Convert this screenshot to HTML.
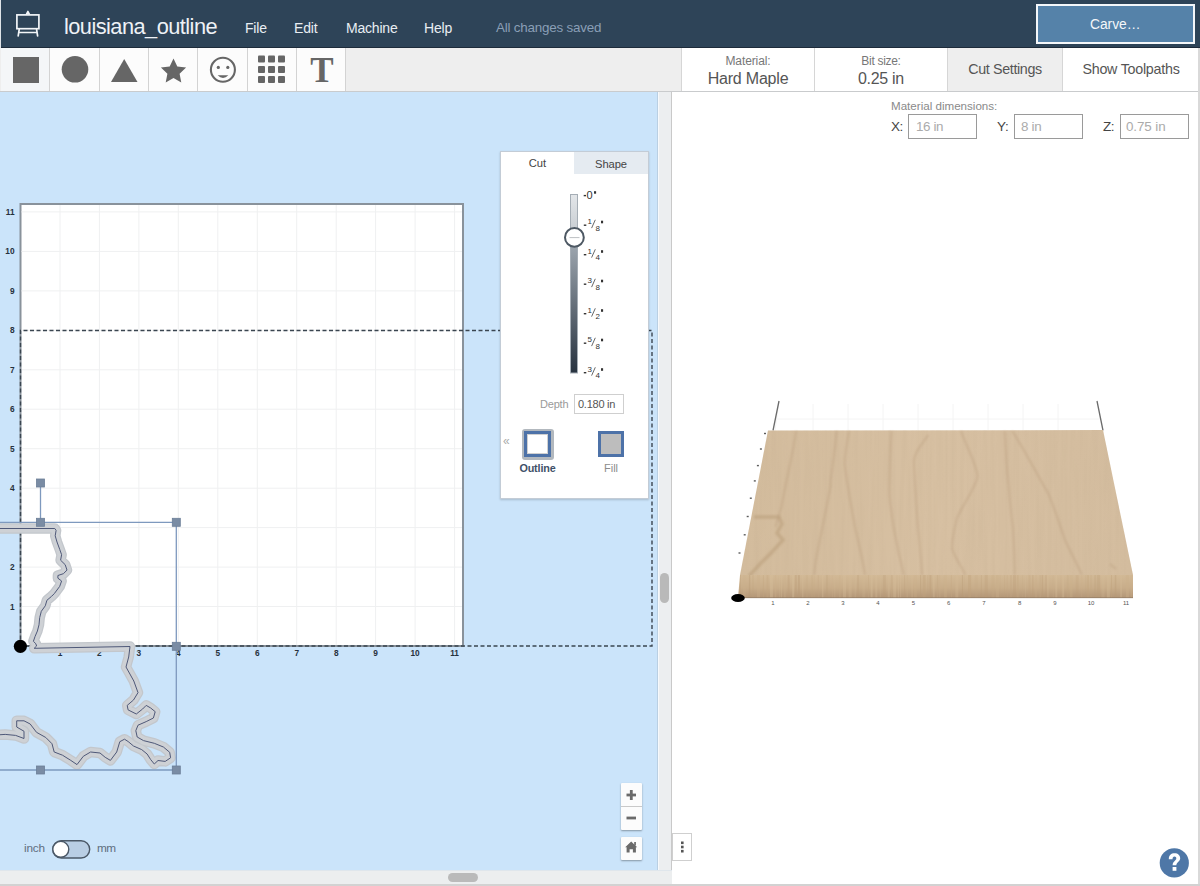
<!DOCTYPE html>
<html><head><meta charset="utf-8">
<style>
*{box-sizing:border-box;margin:0;padding:0}
html,body{width:1200px;height:886px;overflow:hidden;background:#fff;font-family:"Liberation Sans",sans-serif}
.a{position:absolute}
#hdr{left:0;top:0;width:1200px;height:48px;background:#2e4458;border-bottom:1px solid #1d2b3a}
.mn{color:#e9eef3;font-size:14px;top:20px;letter-spacing:-0.2px}
#tb{left:0;top:48px;width:1200px;height:44px;background:#eeeeee;border-bottom:1px solid #c9cbcd}
.tc{top:0;height:43px;width:49px;background:#fbfbfb;border-right:1px solid #d6d6d6}
.ic{fill:#666}
#left{left:0;top:92px;width:658px;height:778px;background:#cbe4fa;overflow:hidden}
#vs{left:657px;top:92px;width:15px;height:792px;background:#eceef0;border-left:1px solid #b9cfe3;border-right:1px solid #c9c9c9;box-shadow:inset 1px 0 0 #f6f9fc}
#hs{left:0;top:870px;width:672px;height:14px;background:#eceeef;border-top:1px solid #dfe6ec}
#right{left:672px;top:92px;width:527px;height:792px;background:#fff}
</style></head>
<body>
<!-- header -->
<div id="hdr" class="a"></div>
<div class="a" style="left:0;top:0;width:1px;height:92px;background:#dfe3e7"></div>
<svg class="a" style="left:14px;top:10px" width="28" height="28" viewBox="0 0 28 28">
 <g fill="none" stroke="#f2f5f8" stroke-width="1.7" stroke-linecap="round">
  <rect x="2.9" y="4.9" width="22" height="13.8"/>
  <path d="M5.2 19.5 L4.2 25.8 M22.6 19.5 L23.6 25.8 M5.2 22.5 L22.6 22.5"/>
 </g>
 <path d="M12.2 4.6 L13.9 1.4 L15.6 4.6" fill="none" stroke="#f2f5f8" stroke-width="1.5" stroke-linejoin="round"/>
</svg>
<div class="a" style="left:64px;top:13.5px;color:#eef2f6;font-size:21.8px;letter-spacing:-0.55px">louisiana_outline</div>
<div class="a mn" style="left:245px">File</div>
<div class="a mn" style="left:294px">Edit</div>
<div class="a mn" style="left:346px">Machine</div>
<div class="a mn" style="left:424px">Help</div>
<div class="a mn" style="left:496px;color:#8a9fb6;font-size:13.4px;top:20px">All changes saved</div>
<div class="a" style="left:1036px;top:4px;width:158.5px;height:39.5px;background:#5582a9;border:2px solid #f4f7fa;color:#f4f7fa;font-size:13.8px;text-align:center;line-height:38.5px">Carve&hellip;</div>

<!-- toolbar -->
<div id="tb" class="a"></div>
<div class="a" style="left:681px;top:48px;width:519px;height:43px;background:#fff"></div>
<div class="a" style="left:1px;top:48px;width:48px;height:43px;background:#f4f6f8"></div>
<div class="a" style="left:49px;top:48px;width:297px;height:43px;background:#fcfcfc"></div>
<div class="a" style="left:49px;top:48px;width:1px;height:43px;background:#d3d3d3"></div>
<div class="a" style="left:99px;top:48px;width:1px;height:43px;background:#d3d3d3"></div>
<div class="a" style="left:148px;top:48px;width:1px;height:43px;background:#d3d3d3"></div>
<div class="a" style="left:197px;top:48px;width:1px;height:43px;background:#d3d3d3"></div>
<div class="a" style="left:247px;top:48px;width:1px;height:43px;background:#d3d3d3"></div>
<div class="a" style="left:296px;top:48px;width:1px;height:43px;background:#d3d3d3"></div>
<div class="a" style="left:345px;top:48px;width:1px;height:43px;background:#d3d3d3"></div>
<svg class="a" style="left:0;top:48px" width="346" height="43" viewBox="0 48 346 43">
 <g fill="#666">
  <rect x="13" y="57" width="26" height="26"/>
  <circle cx="75" cy="69.3" r="13.3"/>
  <path d="M124.2 59 L137.5 82 L111 82 Z"/>
  <path d="M173.5 58.5 L177.3 66.5 L186.1 67.6 L179.6 73.7 L181.3 82.4 L173.5 78.1 L165.7 82.4 L167.4 73.7 L160.9 67.6 L169.7 66.5 Z"/>
  <circle cx="222.9" cy="69.8" r="12" fill="none" stroke="#666" stroke-width="2.1"/>
  <circle cx="218.3" cy="67.4" r="1.6"/>
  <circle cx="227.8" cy="67.4" r="1.6"/>
  <path d="M217.6 75.3 Q223 80.5 228.4 75.3 Z"/>
  <rect x="258" y="55.5" width="7" height="7" rx="1"/><rect x="268" y="55.5" width="7" height="7" rx="1"/><rect x="278" y="55.5" width="7" height="7" rx="1"/>
  <rect x="258" y="66" width="7" height="7" rx="1"/><rect x="268" y="66" width="7" height="7" rx="1"/><rect x="278" y="66" width="7" height="7" rx="1"/>
  <rect x="258" y="76" width="7" height="7" rx="1"/><rect x="268" y="76" width="7" height="7" rx="1"/><rect x="278" y="76" width="7" height="7" rx="1"/>
 </g>
</svg>
<div class="a" style="left:308px;top:51px;width:28px;text-align:center;font-family:'Liberation Serif',serif;font-weight:bold;font-size:35px;line-height:40px;color:#666">T</div>
<!-- right toolbar -->
<div class="a" style="left:681px;top:48px;width:1px;height:43px;background:#d6d6d6"></div>
<div class="a" style="left:814px;top:48px;width:1px;height:43px;background:#d6d6d6"></div>
<div class="a" style="left:947px;top:48px;width:116px;height:43px;background:#eeeeee;border-left:1px solid #d6d6d6;border-right:1px solid #d6d6d6"></div>
<div class="a" style="left:682px;top:54px;width:132px;text-align:center;font-size:12px;letter-spacing:-0.1px;color:#777">Material:</div>
<div class="a" style="left:682px;top:70px;width:132px;text-align:center;font-size:16px;letter-spacing:-0.2px;color:#555">Hard Maple</div>
<div class="a" style="left:815px;top:54px;width:132px;text-align:center;font-size:12px;letter-spacing:-0.3px;color:#777">Bit size:</div>
<div class="a" style="left:815px;top:70px;width:132px;text-align:center;font-size:16px;letter-spacing:-0.3px;color:#555">0.25 in</div>
<div class="a" style="left:948px;top:61px;width:114px;text-align:center;font-size:14.3px;letter-spacing:-0.35px;color:#555">Cut Settings</div>
<div class="a" style="left:1063px;top:61px;width:136px;text-align:center;font-size:14.3px;letter-spacing:-0.25px;color:#555">Show Toolpaths</div>
<div class="a" style="left:1198px;top:48px;width:2px;height:838px;background:#d9d9d9"></div>


<div id="left" class="a"></div>
<svg class="a" style="left:0;top:92px" width="658" height="778" viewBox="0 92 658 778">
 <rect x="20.5" y="204" width="442.5" height="442" fill="#fff" stroke="#89929b" stroke-width="2"/>
 <g stroke="#eff0f1" stroke-width="1"><line x1="60.0" y1="205" x2="60.0" y2="645" /><line x1="21.5" y1="606.5" x2="462" y2="606.5" /><line x1="99.4" y1="205" x2="99.4" y2="645" /><line x1="21.5" y1="567.1" x2="462" y2="567.1" /><line x1="138.9" y1="205" x2="138.9" y2="645" /><line x1="21.5" y1="527.6" x2="462" y2="527.6" /><line x1="178.3" y1="205" x2="178.3" y2="645" /><line x1="21.5" y1="488.2" x2="462" y2="488.2" /><line x1="217.8" y1="205" x2="217.8" y2="645" /><line x1="21.5" y1="448.7" x2="462" y2="448.7" /><line x1="257.3" y1="205" x2="257.3" y2="645" /><line x1="21.5" y1="409.2" x2="462" y2="409.2" /><line x1="296.7" y1="205" x2="296.7" y2="645" /><line x1="21.5" y1="369.8" x2="462" y2="369.8" /><line x1="336.2" y1="205" x2="336.2" y2="645" /><line x1="21.5" y1="330.3" x2="462" y2="330.3" /><line x1="375.6" y1="205" x2="375.6" y2="645" /><line x1="21.5" y1="290.9" x2="462" y2="290.9" /><line x1="415.1" y1="205" x2="415.1" y2="645" /><line x1="21.5" y1="251.4" x2="462" y2="251.4" /><line x1="454.6" y1="205" x2="454.6" y2="645" /><line x1="21.5" y1="211.9" x2="462" y2="211.9" /></g>
 <g font-family="Liberation Sans" font-size="8.3" font-weight="bold" fill="#27313c"><text x="14.5" y="609.5" text-anchor="end">1</text><text x="60.0" y="656" text-anchor="middle">1</text><text x="14.5" y="570.1" text-anchor="end">2</text><text x="99.4" y="656" text-anchor="middle">2</text><text x="14.5" y="530.6" text-anchor="end">3</text><text x="138.9" y="656" text-anchor="middle">3</text><text x="14.5" y="491.2" text-anchor="end">4</text><text x="178.3" y="656" text-anchor="middle">4</text><text x="14.5" y="451.7" text-anchor="end">5</text><text x="217.8" y="656" text-anchor="middle">5</text><text x="14.5" y="412.2" text-anchor="end">6</text><text x="257.3" y="656" text-anchor="middle">6</text><text x="14.5" y="372.8" text-anchor="end">7</text><text x="296.7" y="656" text-anchor="middle">7</text><text x="14.5" y="333.3" text-anchor="end">8</text><text x="336.2" y="656" text-anchor="middle">8</text><text x="14.5" y="293.9" text-anchor="end">9</text><text x="375.6" y="656" text-anchor="middle">9</text><text x="14.5" y="254.4" text-anchor="end">10</text><text x="415.1" y="656" text-anchor="middle">10</text><text x="14.5" y="214.9" text-anchor="end">11</text><text x="454.6" y="656" text-anchor="middle">11</text></g>
 <path d="M20.5 646 L20.5 330.5 L652 330.5 L652 646 L20.5 646" fill="none" stroke="#3a4550" stroke-width="1.4" stroke-dasharray="4 2.5"/>
 <polyline points="-10,528.5 54.8,528.5 56.1,530.4 55.2,535.8 57,542 59.7,549.3 61.6,554.7 60.6,560.2 65.2,564.7 67,570.1 63.4,573.7 57.9,575.5 57.9,578.2 61.6,581 59.7,586.4 54.3,593.6 51.6,596.3 46.9,600.3 45.3,605.8 41.3,611.3 39.7,617.6 39,624.8 37.4,631 35,636.6 33.4,641.3 35.8,643.7 36.6,646 34.2,648.3 130,646.5 128.7,657 126,667 133.8,681 138,692.6 133.5,700 127.2,705.4 128.1,709.9 136.3,714 142.6,709 146.2,705.4 150.7,708 155.2,711.7 153.4,718 146.2,721.6 138,725.2 135.8,730.7 137.2,737 143.5,740.6 154.3,743.3 163.4,747 169.7,752.3 170.6,757.8 165.2,761.4 158,760.5 154.3,764 150.7,759.6 147.1,754 141.7,749.6 133.5,746 128.1,741.5 124.5,739.2 119.8,741.7 116.7,752 110.4,760.4 105.2,757.3 100,753 90.6,752 83.3,756.3 77,764.6 70.8,760.4 62.5,755.2 54.2,752 52,743.75 45.8,737.5 36.5,732.3 30.2,724 24,720.8 16.7,720.8 16.7,727 24,731.25 24,738.5 15.6,735.4 5.2,734.4 -10,735.4" fill="none" stroke="#c3c7cc" stroke-width="10.5" stroke-linejoin="round" stroke-linecap="round"/>
 <polyline points="-10,528.5 54.8,528.5 56.1,530.4 55.2,535.8 57,542 59.7,549.3 61.6,554.7 60.6,560.2 65.2,564.7 67,570.1 63.4,573.7 57.9,575.5 57.9,578.2 61.6,581 59.7,586.4 54.3,593.6 51.6,596.3 46.9,600.3 45.3,605.8 41.3,611.3 39.7,617.6 39,624.8 37.4,631 35,636.6 33.4,641.3 35.8,643.7 36.6,646 34.2,648.3 130,646.5 128.7,657 126,667 133.8,681 138,692.6 133.5,700 127.2,705.4 128.1,709.9 136.3,714 142.6,709 146.2,705.4 150.7,708 155.2,711.7 153.4,718 146.2,721.6 138,725.2 135.8,730.7 137.2,737 143.5,740.6 154.3,743.3 163.4,747 169.7,752.3 170.6,757.8 165.2,761.4 158,760.5 154.3,764 150.7,759.6 147.1,754 141.7,749.6 133.5,746 128.1,741.5 124.5,739.2 119.8,741.7 116.7,752 110.4,760.4 105.2,757.3 100,753 90.6,752 83.3,756.3 77,764.6 70.8,760.4 62.5,755.2 54.2,752 52,743.75 45.8,737.5 36.5,732.3 30.2,724 24,720.8 16.7,720.8 16.7,727 24,731.25 24,738.5 15.6,735.4 5.2,734.4 -10,735.4" fill="none" stroke="#ced1d5" stroke-width="8" stroke-linejoin="round" stroke-linecap="round"/>
 <polyline points="-10,528.5 54.8,528.5 56.1,530.4 55.2,535.8 57,542 59.7,549.3 61.6,554.7 60.6,560.2 65.2,564.7 67,570.1 63.4,573.7 57.9,575.5 57.9,578.2 61.6,581 59.7,586.4 54.3,593.6 51.6,596.3 46.9,600.3 45.3,605.8 41.3,611.3 39.7,617.6 39,624.8 37.4,631 35,636.6 33.4,641.3 35.8,643.7 36.6,646 34.2,648.3 130,646.5 128.7,657 126,667 133.8,681 138,692.6 133.5,700 127.2,705.4 128.1,709.9 136.3,714 142.6,709 146.2,705.4 150.7,708 155.2,711.7 153.4,718 146.2,721.6 138,725.2 135.8,730.7 137.2,737 143.5,740.6 154.3,743.3 163.4,747 169.7,752.3 170.6,757.8 165.2,761.4 158,760.5 154.3,764 150.7,759.6 147.1,754 141.7,749.6 133.5,746 128.1,741.5 124.5,739.2 119.8,741.7 116.7,752 110.4,760.4 105.2,757.3 100,753 90.6,752 83.3,756.3 77,764.6 70.8,760.4 62.5,755.2 54.2,752 52,743.75 45.8,737.5 36.5,732.3 30.2,724 24,720.8 16.7,720.8 16.7,727 24,731.25 24,738.5 15.6,735.4 5.2,734.4 -10,735.4" fill="none" stroke="#4e5878" stroke-width="1" stroke-linejoin="round"/>
 <g stroke="#7e99be" stroke-width="1.3" fill="none">
  <path d="M-2 522.3 H176.3 V770 H-2"/>
  <path d="M40.5 483 V522.3"/>
 </g>
 <g fill="#7a8ca4" stroke="#6b7e97" stroke-width="0.8">
  <rect x="36.5" y="479" width="8" height="8"/>
  <rect x="36.5" y="518.3" width="8" height="8"/>
  <rect x="172.3" y="518.3" width="8" height="8"/>
  <rect x="172.3" y="642.3" width="8" height="8"/>
  <rect x="36.5" y="766" width="8" height="8"/>
  <rect x="172.3" y="766" width="8" height="8"/>
 </g>
 <circle cx="20.4" cy="646.3" r="6.6" fill="#000"/>
</svg>

<div class="a" style="left:500px;top:151px;width:149px;height:348px;background:#fff;border:1px solid #c3ccd6;box-shadow:0 1px 2px rgba(0,0,0,0.18)"></div>
<div class="a" style="left:574px;top:152px;width:74px;height:22px;background:#e5ebf1"></div>
<div class="a" style="left:501px;top:157px;width:73px;text-align:center;font-size:11.2px;color:#444">Cut</div>
<div class="a" style="left:574px;top:158px;width:74px;text-align:center;font-size:11.2px;letter-spacing:-0.1px;color:#444">Shape</div>
<svg class="a" style="left:500px;top:151px" width="149" height="348" viewBox="500 151 149 348">
 <defs>
  <linearGradient id="trk" x1="0" y1="0" x2="0" y2="1">
   <stop offset="0" stop-color="#e3e6e9"/>
   <stop offset="0.2" stop-color="#c9ced3"/>
   <stop offset="0.3" stop-color="#9aa3ac"/>
   <stop offset="1" stop-color="#27323f"/>
  </linearGradient>
 </defs>
 <rect x="570.5" y="194.5" width="7" height="178.5" fill="url(#trk)" stroke="#a5adb5" stroke-width="1"/>
 <circle cx="574.4" cy="237.4" r="9.4" fill="#fff" stroke="#4d5863" stroke-width="2"/>
 <line x1="569.5" y1="237.6" x2="579.5" y2="237.6" stroke="#a9adb2" stroke-width="0.8"/>
 <g font-family="Liberation Sans" fill="#333"><rect x="583.7" y="194.9" width="2.3" height="1.4"/><text x="586.6" y="199.1" font-size="11">0</text><rect x="594" y="191.2" width="2.1" height="2.5"/><rect x="583.8" y="224.5" width="2.5" height="1.4"/><text x="587.4" y="224.2" font-size="8">1</text><line x1="591.6" y1="228.1" x2="595.3" y2="219.8" stroke="#555" stroke-width="0.9"/><text x="595.6" y="230.5" font-size="8">8</text><rect x="601" y="220.7" width="2.1" height="2.6"/><rect x="583.8" y="254.0" width="2.5" height="1.4"/><text x="587.4" y="253.7" font-size="8">1</text><line x1="591.6" y1="257.6" x2="595.3" y2="249.3" stroke="#555" stroke-width="0.9"/><text x="595.6" y="260.0" font-size="8">4</text><rect x="601" y="250.2" width="2.1" height="2.6"/><rect x="583.8" y="283.5" width="2.5" height="1.4"/><text x="587.4" y="283.2" font-size="8">3</text><line x1="591.6" y1="287.1" x2="595.3" y2="278.8" stroke="#555" stroke-width="0.9"/><text x="595.6" y="289.5" font-size="8">8</text><rect x="601" y="279.7" width="2.1" height="2.6"/><rect x="583.8" y="313.0" width="2.5" height="1.4"/><text x="587.4" y="312.7" font-size="8">1</text><line x1="591.6" y1="316.6" x2="595.3" y2="308.3" stroke="#555" stroke-width="0.9"/><text x="595.6" y="319.0" font-size="8">2</text><rect x="601" y="309.2" width="2.1" height="2.6"/><rect x="583.8" y="342.5" width="2.5" height="1.4"/><text x="587.4" y="342.2" font-size="8">5</text><line x1="591.6" y1="346.1" x2="595.3" y2="337.8" stroke="#555" stroke-width="0.9"/><text x="595.6" y="348.5" font-size="8">8</text><rect x="601" y="338.7" width="2.1" height="2.6"/><rect x="583.8" y="372.0" width="2.5" height="1.4"/><text x="587.4" y="371.7" font-size="8">3</text><line x1="591.6" y1="375.6" x2="595.3" y2="367.3" stroke="#555" stroke-width="0.9"/><text x="595.6" y="378.0" font-size="8">4</text><rect x="601" y="368.2" width="2.1" height="2.6"/></g>
</svg>
<div class="a" style="left:540px;top:398px;font-size:11px;letter-spacing:-0.2px;color:#9a9a9a">Depth</div>
<div class="a" style="left:574px;top:394px;width:50px;height:20px;border:1px solid #cfcfcf;background:#fff"></div>
<div class="a" style="left:578px;top:398px;font-size:11px;letter-spacing:-0.25px;color:#555">0.180 in</div>
<div class="a" style="left:503px;top:434px;font-size:12px;color:#aaa">&laquo;</div>
<div class="a" style="left:522px;top:429px;width:32px;height:31px;border-radius:3px;background:#b2b8be"></div>
<div class="a" style="left:524px;top:431px;width:27px;height:26px;border:3px solid #4d72a8;background:#fff;box-shadow:inset 0 0 0 1px #d0d0d0"></div>
<div class="a" style="left:597.5px;top:431px;width:26.5px;height:26px;border:3px solid #4d72a8;background:#bdbdbd"></div>
<div class="a" style="left:515px;top:462px;width:45px;text-align:center;font-size:10.8px;font-weight:bold;letter-spacing:-0.15px;color:#3f5169">Outline</div>
<div class="a" style="left:595px;top:462px;width:32px;text-align:center;font-size:11px;color:#8c8c8c">Fill</div>

<div class="a" style="left:621px;top:783px;width:21px;height:47px;background:#fcfcfc;box-shadow:0 1px 2px rgba(0,0,0,0.35);border-radius:1px"></div>
<div class="a" style="left:621px;top:806px;width:21px;height:1px;background:#c9c9c9"></div>
<div class="a" style="left:621px;top:837px;width:21px;height:23px;background:#fcfcfc;box-shadow:0 1px 2px rgba(0,0,0,0.35);border-radius:1px"></div>
<svg class="a" style="left:621px;top:783px" width="21" height="77" viewBox="621 783 21 77">
 <g fill="#6a6a6a">
  <rect x="626.5" y="793.6" width="9.5" height="2.8"/>
  <rect x="629.9" y="790" width="2.8" height="10"/>
  <rect x="626.5" y="816.6" width="9.5" height="2.8"/>
  <path d="M631.2 841.5 L637.2 847.3 L635.9 847.3 L635.9 852.5 L632.9 852.5 L632.9 849.3 L629.6 849.3 L629.6 852.5 L626.6 852.5 L626.6 847.3 L625.2 847.3 Z"/>
  <rect x="634.2" y="842" width="1.7" height="3.5"/>
 </g>
</svg>
<div class="a" style="left:24px;top:841.3px;font-size:11.8px;letter-spacing:-0.2px;color:#5f6e7e">inch</div>
<div class="a" style="left:97px;top:841.3px;font-size:11.8px;letter-spacing:-0.5px;color:#5f6e7e">mm</div>
<svg class="a" style="left:50px;top:838px" width="42" height="22" viewBox="50 838 42 22">
 <rect x="52.7" y="840.7" width="37" height="17.3" rx="8.65" fill="#b9cee4" stroke="#4b5867" stroke-width="1.4"/>
 <circle cx="60.8" cy="849.3" r="8" fill="#fff" stroke="#4b5867" stroke-width="1.4"/>
</svg>
<div id="vs" class="a"></div>
<div class="a" style="left:660px;top:573px;width:9px;height:30px;border-radius:5px;background:#b9b9b9"></div>
<div id="hs" class="a"></div>
<div class="a" style="left:448px;top:873px;width:30px;height:9px;border-radius:5px;background:#bababa"></div>
<div class="a" style="left:0;top:884px;width:1200px;height:2px;background:#d2d2d2"></div>

<div class="a" style="left:891px;top:99px;font-size:11.6px;color:#8a8a8a">Material dimensions:</div>
<div class="a" style="left:891px;top:119px;font-size:13.5px;letter-spacing:-0.6px;color:#444">X:</div>
<div class="a" style="left:908px;top:114px;width:69px;height:25px;border:1px solid #9a9a9a;background:#fff"></div>
<div class="a" style="left:916px;top:119px;font-size:13.4px;letter-spacing:-0.4px;color:#ababab">16 in</div>
<div class="a" style="left:997px;top:119px;font-size:13.5px;letter-spacing:-0.2px;color:#444">Y:</div>
<div class="a" style="left:1014px;top:114px;width:69px;height:25px;border:1px solid #9a9a9a;background:#fff"></div>
<div class="a" style="left:1021px;top:119px;font-size:13.4px;letter-spacing:-0.3px;color:#ababab">8 in</div>
<div class="a" style="left:1103px;top:119px;font-size:13.5px;letter-spacing:-0.4px;color:#444">Z:</div>
<div class="a" style="left:1120px;top:114px;width:69px;height:25px;border:1px solid #9a9a9a;background:#fff"></div>
<div class="a" style="left:1126px;top:119px;font-size:13.4px;letter-spacing:-0.1px;color:#ababab">0.75 in</div>
<svg class="a" style="left:672px;top:380px" width="526" height="240" viewBox="672 380 526 240">
 <defs>
  <filter id="grain" x="0" y="0" width="100%" height="100%">
   <feTurbulence type="fractalNoise" baseFrequency="0.25 0.012" numOctaves="2" seed="4" result="n"/>
   <feColorMatrix in="n" type="matrix" values="0 0 0 0 0.55  0 0 0 0 0.42  0 0 0 0 0.28  0 0 0 -1.1 0.75" result="c"/>
   <feComposite in="c" in2="SourceGraphic" operator="in"/>
  </filter>
  <linearGradient id="wood" x1="0" y1="0" x2="1" y2="0">
   <stop offset="0" stop-color="#d3bc9d"/>
   <stop offset="0.5" stop-color="#d7c0a2"/>
   <stop offset="1" stop-color="#d4bd9f"/>
  </linearGradient>
  <linearGradient id="front" x1="0" y1="0" x2="0" y2="1">
   <stop offset="0" stop-color="#d2b996"/>
   <stop offset="0.55" stop-color="#c8ad8a"/>
   <stop offset="1" stop-color="#b39677"/>
  </linearGradient>
 </defs>
 <g stroke="#f4f4f4" stroke-width="1" fill="none">
  <path d="M776 419 H1100 M775 430 L779 401"/>
  <path d="M813 430 V404 M848 430 V404 M883 430 V404 M918 430 V404 M953 430 V404 M988 430 V404 M1023 430 V404 M1058 430 V404"/>
 </g>
 <path d="M773 430.5 L779 401 M1103 430.5 L1097 401" stroke="#6b6b6b" stroke-width="1.3"/>
 <polygon points="768,430.5 1103,430 1133,575 740,575" fill="url(#wood)"/>
 <polygon points="768,430.5 1103,430 1133,575 740,575" fill="#000" filter="url(#grain)" opacity="0.32"/>
 <g fill="none" stroke="#b09272" stroke-width="2" opacity="0.32" filter="url(#bl2)">
  <path d="M796 431 C794 450 786 480 781.7 506 C779 515 777 522 775.6 527"/>
  <path d="M836.6 431 C834 460 830 480 830.5 486 C826 510 822 530 820.4 537 C818 550 815 560 814.3 575"/>
  <path d="M848.8 431 C846 450 844 460 844.8 466 C848 490 852 510 855 527 C859 545 863 560 865 575"/>
  <path d="M891.5 431 C890 460 889 480 889.5 496 C892 520 896 540 897.6 547 C900 560 902 566 903.7 575"/>
  <path d="M928 435 C922 445 914 452 913.9 462 C915 490 917 510 918 527 C920 545 921 560 922 575"/>
  <path d="M960.9 431 C968 450 977 465 977.6 477 C972 495 962 505 956.7 519 C953 535 951 545 952.5 550 C956 560 962 566 965 575"/>
  <path d="M1004.7 431 C1006 460 1008 480 1008.9 488 C1010 505 1012 520 1013 529 C1014 545 1015 560 1015 575"/>
  <path d="M1012 431 C1016 436 1018 440 1019 442 C1030 460 1040 480 1048.6 494 C1055 510 1060 525 1065 540 C1072 555 1078 566 1082 575"/>
  <path d="M1110 564 L1116 569"/>
 </g>
 <filter id="bl" x="-20%" y="-20%" width="140%" height="140%"><feGaussianBlur stdDeviation="1.2"/></filter>
 <filter id="bl2" x="-5%" y="-5%" width="110%" height="110%"><feGaussianBlur stdDeviation="0.9"/></filter>
 <path d="M754 517 L779 517 L782 524 L777 533 L783 540 L772 552 L760 564 L749 576" fill="none" stroke="#b89c78" stroke-width="3.5" opacity="0.55" filter="url(#bl)"/>
 <polygon points="740,575 1133,575 1133,598 738,598" fill="url(#front)"/>
 <g opacity="0.5"><rect x="740.0" y="575" width="1" height="23" fill="#b89a75" opacity="0.59"/><rect x="742.8" y="575" width="3" height="23" fill="#cbb08b" opacity="0.63"/><rect x="746.5" y="575" width="1" height="23" fill="#cbb08b" opacity="0.47"/><rect x="748.8" y="575" width="1.5" height="23" fill="#b89a75" opacity="0.73"/><rect x="752.5" y="575" width="1" height="23" fill="#bfa27c" opacity="0.64"/><rect x="757.0" y="575" width="3" height="23" fill="#cbb08b" opacity="0.68"/><rect x="762.9" y="575" width="1" height="23" fill="#bfa27c" opacity="0.69"/><rect x="766.5" y="575" width="2" height="23" fill="#c3a782" opacity="0.72"/><rect x="769.9" y="575" width="3" height="23" fill="#d8c09c" opacity="0.76"/><rect x="774.8" y="575" width="1.5" height="23" fill="#cbb08b" opacity="0.68"/><rect x="778.8" y="575" width="1" height="23" fill="#d4bb97" opacity="0.39"/><rect x="780.8" y="575" width="1" height="23" fill="#d4bb97" opacity="0.78"/><rect x="783.8" y="575" width="2" height="23" fill="#cbb08b" opacity="0.58"/><rect x="787.6" y="575" width="2" height="23" fill="#b89a75" opacity="0.61"/><rect x="792.2" y="575" width="2" height="23" fill="#d8c09c" opacity="0.76"/><rect x="794.8" y="575" width="2" height="23" fill="#b89a75" opacity="0.65"/><rect x="797.9" y="575" width="2" height="23" fill="#b89a75" opacity="0.76"/><rect x="802.3" y="575" width="1" height="23" fill="#d8c09c" opacity="0.72"/><rect x="805.9" y="575" width="2" height="23" fill="#c3a782" opacity="0.38"/><rect x="811.3" y="575" width="1.5" height="23" fill="#c3a782" opacity="0.50"/><rect x="813.6" y="575" width="1" height="23" fill="#c3a782" opacity="0.48"/><rect x="817.8" y="575" width="1" height="23" fill="#c3a782" opacity="0.62"/><rect x="821.9" y="575" width="1.5" height="23" fill="#d8c09c" opacity="0.61"/><rect x="825.9" y="575" width="2" height="23" fill="#b89a75" opacity="0.46"/><rect x="828.5" y="575" width="1" height="23" fill="#c3a782" opacity="0.40"/><rect x="831.9" y="575" width="1" height="23" fill="#cbb08b" opacity="0.48"/><rect x="834.3" y="575" width="1" height="23" fill="#d4bb97" opacity="0.49"/><rect x="839.1" y="575" width="1.5" height="23" fill="#cbb08b" opacity="0.56"/><rect x="843.0" y="575" width="3" height="23" fill="#d8c09c" opacity="0.60"/><rect x="848.6" y="575" width="3" height="23" fill="#d4bb97" opacity="0.54"/><rect x="854.7" y="575" width="1" height="23" fill="#d4bb97" opacity="0.55"/><rect x="857.1" y="575" width="2" height="23" fill="#b89a75" opacity="0.50"/><rect x="862.3" y="575" width="3" height="23" fill="#d4bb97" opacity="0.36"/><rect x="868.0" y="575" width="1" height="23" fill="#c3a782" opacity="0.64"/><rect x="870.6" y="575" width="2" height="23" fill="#d8c09c" opacity="0.76"/><rect x="875.3" y="575" width="2" height="23" fill="#d8c09c" opacity="0.57"/><rect x="879.8" y="575" width="1" height="23" fill="#d4bb97" opacity="0.46"/><rect x="882.9" y="575" width="3" height="23" fill="#b89a75" opacity="0.49"/><rect x="887.7" y="575" width="2" height="23" fill="#d4bb97" opacity="0.73"/><rect x="891.1" y="575" width="1.5" height="23" fill="#c3a782" opacity="0.70"/><rect x="893.2" y="575" width="3" height="23" fill="#d8c09c" opacity="0.68"/><rect x="897.8" y="575" width="1" height="23" fill="#d8c09c" opacity="0.71"/><rect x="900.1" y="575" width="1" height="23" fill="#d8c09c" opacity="0.55"/><rect x="904.1" y="575" width="1" height="23" fill="#b89a75" opacity="0.49"/><rect x="906.7" y="575" width="1" height="23" fill="#cbb08b" opacity="0.71"/><rect x="911.6" y="575" width="1" height="23" fill="#d4bb97" opacity="0.68"/><rect x="913.9" y="575" width="3" height="23" fill="#cbb08b" opacity="0.47"/><rect x="920.1" y="575" width="1" height="23" fill="#b89a75" opacity="0.78"/><rect x="922.7" y="575" width="3" height="23" fill="#bfa27c" opacity="0.74"/><rect x="927.4" y="575" width="1" height="23" fill="#b89a75" opacity="0.51"/><rect x="929.4" y="575" width="2" height="23" fill="#b89a75" opacity="0.71"/><rect x="932.8" y="575" width="2" height="23" fill="#d8c09c" opacity="0.54"/><rect x="936.8" y="575" width="1.5" height="23" fill="#c3a782" opacity="0.76"/><rect x="939.3" y="575" width="1" height="23" fill="#cbb08b" opacity="0.77"/><rect x="943.9" y="575" width="3" height="23" fill="#cbb08b" opacity="0.60"/><rect x="950.9" y="575" width="1" height="23" fill="#c3a782" opacity="0.69"/><rect x="955.3" y="575" width="3" height="23" fill="#d4bb97" opacity="0.59"/><rect x="961.9" y="575" width="1" height="23" fill="#b89a75" opacity="0.79"/><rect x="963.8" y="575" width="1" height="23" fill="#c3a782" opacity="0.37"/><rect x="968.1" y="575" width="3" height="23" fill="#bfa27c" opacity="0.75"/><rect x="974.8" y="575" width="3" height="23" fill="#c3a782" opacity="0.36"/><rect x="980.9" y="575" width="1" height="23" fill="#b89a75" opacity="0.48"/><rect x="984.7" y="575" width="3" height="23" fill="#b89a75" opacity="0.54"/><rect x="991.5" y="575" width="3" height="23" fill="#c3a782" opacity="0.50"/><rect x="995.9" y="575" width="3" height="23" fill="#cbb08b" opacity="0.72"/><rect x="999.6" y="575" width="1" height="23" fill="#bfa27c" opacity="0.40"/><rect x="1004.2" y="575" width="1" height="23" fill="#bfa27c" opacity="0.46"/><rect x="1006.7" y="575" width="1" height="23" fill="#c3a782" opacity="0.57"/><rect x="1010.2" y="575" width="1.5" height="23" fill="#c3a782" opacity="0.69"/><rect x="1013.0" y="575" width="3" height="23" fill="#b89a75" opacity="0.58"/><rect x="1016.7" y="575" width="2" height="23" fill="#c3a782" opacity="0.74"/><rect x="1021.9" y="575" width="1" height="23" fill="#c3a782" opacity="0.37"/><rect x="1025.1" y="575" width="1" height="23" fill="#d8c09c" opacity="0.39"/><rect x="1028.4" y="575" width="2" height="23" fill="#bfa27c" opacity="0.49"/><rect x="1032.1" y="575" width="1.5" height="23" fill="#b89a75" opacity="0.49"/><rect x="1035.0" y="575" width="2" height="23" fill="#cbb08b" opacity="0.41"/><rect x="1039.5" y="575" width="1.5" height="23" fill="#c3a782" opacity="0.61"/><rect x="1041.6" y="575" width="1.5" height="23" fill="#b89a75" opacity="0.64"/><rect x="1045.5" y="575" width="1" height="23" fill="#b89a75" opacity="0.75"/><rect x="1047.2" y="575" width="1.5" height="23" fill="#d8c09c" opacity="0.49"/><rect x="1052.5" y="575" width="1.5" height="23" fill="#cbb08b" opacity="0.36"/><rect x="1055.3" y="575" width="2" height="23" fill="#d8c09c" opacity="0.62"/><rect x="1060.6" y="575" width="1" height="23" fill="#cbb08b" opacity="0.41"/><rect x="1062.2" y="575" width="2" height="23" fill="#d4bb97" opacity="0.79"/><rect x="1066.7" y="575" width="2" height="23" fill="#c3a782" opacity="0.56"/><rect x="1069.6" y="575" width="3" height="23" fill="#cbb08b" opacity="0.65"/><rect x="1075.7" y="575" width="3" height="23" fill="#b89a75" opacity="0.40"/><rect x="1081.2" y="575" width="1" height="23" fill="#cbb08b" opacity="0.41"/><rect x="1085.4" y="575" width="1" height="23" fill="#b89a75" opacity="0.39"/><rect x="1087.3" y="575" width="1.5" height="23" fill="#bfa27c" opacity="0.72"/><rect x="1090.5" y="575" width="1" height="23" fill="#c3a782" opacity="0.73"/><rect x="1094.3" y="575" width="2" height="23" fill="#b89a75" opacity="0.48"/><rect x="1097.1" y="575" width="3" height="23" fill="#b89a75" opacity="0.59"/><rect x="1101.5" y="575" width="3" height="23" fill="#d8c09c" opacity="0.39"/><rect x="1106.9" y="575" width="3" height="23" fill="#d4bb97" opacity="0.74"/><rect x="1111.0" y="575" width="1" height="23" fill="#bfa27c" opacity="0.80"/><rect x="1114.8" y="575" width="1.5" height="23" fill="#b89a75" opacity="0.67"/><rect x="1120.1" y="575" width="2" height="23" fill="#d4bb97" opacity="0.62"/><rect x="1125.9" y="575" width="3" height="23" fill="#cbb08b" opacity="0.78"/><rect x="1130.7" y="575" width="1" height="23" fill="#cbb08b" opacity="0.73"/></g>
 <rect x="738" y="597" width="395" height="1.2" fill="#8f7a62" opacity="0.6"/>
 <ellipse cx="738" cy="598" rx="6.8" ry="4" fill="#000"/>
 <rect x="764.0" y="432.8" width="2" height="1.4" fill="#333" opacity="0.8"/><rect x="759.9" y="448.3" width="2" height="1.4" fill="#333" opacity="0.8"/><rect x="756.9" y="464.9" width="2" height="1.4" fill="#333" opacity="0.8"/><rect x="753.8" y="480.2" width="2" height="1.4" fill="#333" opacity="0.8"/><rect x="749.8" y="497.5" width="2" height="1.4" fill="#333" opacity="0.8"/><rect x="746.7" y="515.8" width="2" height="1.4" fill="#333" opacity="0.8"/><rect x="743.7" y="534.1" width="2" height="1.4" fill="#333" opacity="0.8"/><rect x="738.5" y="552.3" width="2" height="1.4" fill="#333" opacity="0.8"/>
 <g font-family="Liberation Sans" font-size="6" fill="#555"><text x="773" y="605" text-anchor="middle">1</text><text x="808" y="605" text-anchor="middle">2</text><text x="843" y="605" text-anchor="middle">3</text><text x="878" y="605" text-anchor="middle">4</text><text x="913.5" y="605" text-anchor="middle">5</text><text x="948.7" y="605" text-anchor="middle">6</text><text x="984" y="605" text-anchor="middle">7</text><text x="1019.6" y="605" text-anchor="middle">8</text><text x="1055" y="605" text-anchor="middle">9</text><text x="1091" y="605" text-anchor="middle">10</text><text x="1126" y="605" text-anchor="middle">11</text></g>
</svg>
<div class="a" style="left:672px;top:833px;width:20px;height:28px;border:1px solid #cfcfcf;background:#fff"></div>
<svg class="a" style="left:672px;top:833px" width="20" height="28"><g fill="#555"><rect x="9" y="8.5" width="2.6" height="2.6"/><rect x="9" y="12.7" width="2.6" height="2.6"/><rect x="9" y="16.9" width="2.6" height="2.6"/></g></svg>
<svg class="a" style="left:1158px;top:847px" width="32" height="32" viewBox="0 0 32 32">
 <circle cx="16.3" cy="15.9" r="14.6" fill="#4e77a7"/>
 <path d="M10.8 12.2 C10.8 8.3 13.2 6.3 16.6 6.3 C20 6.3 22.2 8.4 22.2 11.3 C22.2 14.5 18.6 15.2 18.3 18.2 L14.6 18.2 C14.6 14.2 18.3 13.4 18.3 11.4 C18.3 10.2 17.6 9.5 16.5 9.5 C15.3 9.5 14.5 10.4 14.5 12.2 Z" fill="#fff"/>
 <rect x="14.6" y="20" width="3.8" height="3.8" fill="#fff"/>
</svg>
</body></html>
